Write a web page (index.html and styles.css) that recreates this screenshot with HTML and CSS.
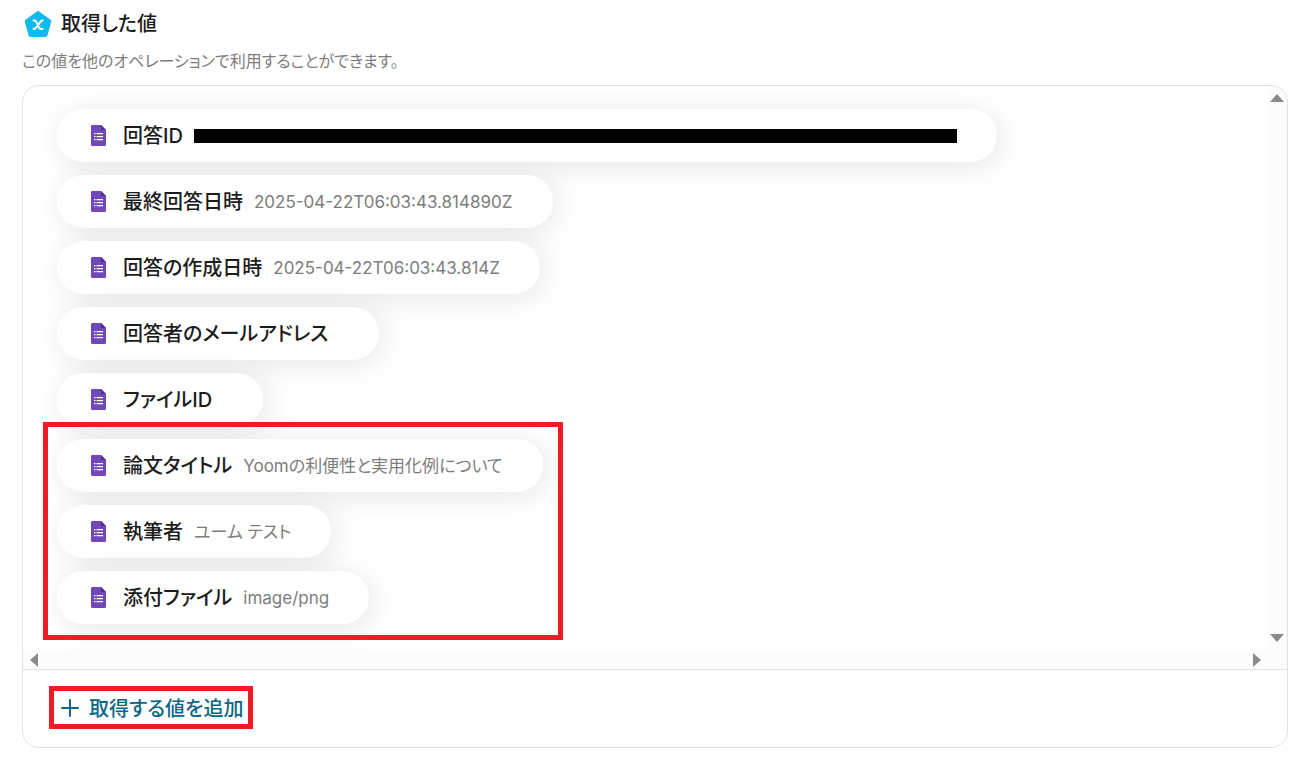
FILE: index.html
```html
<!DOCTYPE html>
<html lang="ja">
<head>
    <meta charset="UTF-8">
    <meta name="viewport" content="width=device-width, initial-scale=1.0">
    <title>取得した値</title>
    <link rel="stylesheet" href="styles.css">
</head>
<body>

<svg class="sprite" aria-hidden="true">
    <symbol id="form-icon" viewBox="0 0 15 21">
        <path fill="#7248b9" d="M1.200 0H10l5 5v14.800a1.200 1.200 0 0 1-1.200 1.200H1.200A1.200 1.200 0 0 1 0 19.800V1.200A1.200 1.200 0 0 1 1.200 0z"/>
        <path fill="#4f2f8c" d="M10 0l5 5h-5z"/>
        <path fill="#fff" d="M5.500 8h6.500v1.200H5.500zM5.500 11h6.500v1.200H5.500zM5.500 14h6.500v1.200H5.500zM3 8h1.500v1.200H3zM3 11h1.500v1.200H3zM3 14h1.500v1.200H3z"/>
    </symbol>
</svg>

<main class="container">
    <header class="heading">
        <svg class="heading-icon" viewBox="0 0 28 28" aria-hidden="true">
            <path fill="#12b9ec" stroke="#12b9ec" stroke-width="4" stroke-linejoin="round" d="M14 3L25.300 11.300L21.500 25H6.500L2.700 11.300z"/>
            <path fill="none" stroke="#fff" stroke-width="2" stroke-linecap="round" stroke-linejoin="round" d="M9.500 10.500h1q1.200 0 1.800 1.200l2.900 6q.6 1.200 1.800 1.200h1.400M18.600 10.500q-1.300 0-2.200 1.300l-4.400 5.800q-.9 1.300-2.500 1.300"/>
        </svg>
        <h1>取得した値</h1>
    </header>
    <p class="description">この値を他のオペレーションで利用することができます。</p>

    <section class="card">
        <div class="scroll-area">
            <div class="value-list">
                <div class="pill">
                    <svg class="form-icon"><use href="#form-icon"/></svg>
                    <span class="label">回答ID</span>
                    <span class="value masked"></span>
                </div>
                <div class="pill">
                    <svg class="form-icon"><use href="#form-icon"/></svg>
                    <span class="label">最終回答日時</span>
                    <span class="value">2025-04-22T06:03:43.814890Z</span>
                </div>
                <div class="pill">
                    <svg class="form-icon"><use href="#form-icon"/></svg>
                    <span class="label">回答の作成日時</span>
                    <span class="value">2025-04-22T06:03:43.814Z</span>
                </div>
                <div class="pill">
                    <svg class="form-icon"><use href="#form-icon"/></svg>
                    <span class="label">回答者のメールアドレス</span>
                    <span class="value"></span>
                </div>
                <div class="pill">
                    <svg class="form-icon"><use href="#form-icon"/></svg>
                    <span class="label">ファイルID</span>
                    <span class="value"></span>
                </div>
                <div class="highlight-group">
                    <div class="pill">
                        <svg class="form-icon"><use href="#form-icon"/></svg>
                        <span class="label">論文タイトル</span>
                        <span class="value">Yoomの利便性と実用化例について</span>
                    </div>
                    <div class="pill">
                        <svg class="form-icon"><use href="#form-icon"/></svg>
                        <span class="label">執筆者</span>
                        <span class="value">ユーム テスト</span>
                    </div>
                    <div class="pill">
                        <svg class="form-icon"><use href="#form-icon"/></svg>
                        <span class="label">添付ファイル</span>
                        <span class="value">image/png</span>
                    </div>
                </div>
            </div>
            <div class="bar bar-vertical">
                <button class="arrow" type="button" aria-label="上へ"><svg viewBox="0 0 14 8"><path d="M7 0l7 8H0z"/></svg></button>
                <button class="arrow" type="button" aria-label="下へ"><svg viewBox="0 0 14 8"><path d="M0 0h14L7 8z"/></svg></button>
            </div>
            <div class="bar bar-horizontal">
                <button class="arrow side" type="button" aria-label="左へ"><svg viewBox="0 0 8 14"><path d="M8 0v14L0 7z"/></svg></button>
                <button class="arrow side" type="button" aria-label="右へ"><svg viewBox="0 0 8 14"><path d="M0 0l8 7-8 7z"/></svg></button>
            </div>
        </div>
        <footer class="card-footer">
            <button class="add-btn" type="button">
                <svg viewBox="0 0 18 18" aria-hidden="true"><path d="M9 1v16M1 9h16"/></svg>
                取得する値を追加
            </button>
        </footer>
    </section>
</main>

</body>
</html>
```

FILE: styles.css
```css
:root {
    --text-color: #1c1c1c;
    --muted-color: #7d7d7d;
    --border-color: #e2e2e2;
    --link-color: #0b6885;
    --highlight-color: #ee1c25;
}

* {
    box-sizing: border-box;
    margin: 0;
    padding: 0;
}

body {
    font-family: Inter, "Noto Sans CJK JP", sans-serif;
    font-feature-settings: "palt";
    background-color: #fff;
    color: var(--text-color);
}

button {
    border: none;
    background: none;
    font: inherit;
    cursor: pointer;
}

.sprite {
    display: block;
    width: 0;
    height: 0;
}

.container {
    padding: 9px 13px 9px 22px;
}

.heading {
    display: flex;
    align-items: center;
    gap: 9px;
    height: 30px;
    padding-left: 2px;
}

.heading-icon {
    width: 28px;
    height: 28px;
}

h1 {
    font-size: 20px;
    font-weight: 500;
    line-height: 30px;
}

.description {
    margin: 11px 0 12px;
    font-size: 16px;
    line-height: 23px;
    color: var(--muted-color);
}

.card {
    border: 1px solid var(--border-color);
    border-radius: 17px;
    overflow: hidden;
}

.scroll-area {
    display: grid;
    grid-template-columns: 1fr 20px;
    border-bottom: 1px solid var(--border-color);
}

.value-list {
    display: flex;
    flex-direction: column;
    align-items: flex-start;
    gap: 13px;
    min-width: 0;
    padding: 23px 34px 26px;
    overflow: hidden;
}

.pill {
    display: flex;
    align-items: center;
    height: 53px;
    padding: 0 40px 0 34px;
    border-radius: 27px;
    background-color: #fff;
    box-shadow: 4px 4px 32px rgba(0, 0, 0, 0.1);
    white-space: nowrap;
}

.form-icon {
    width: 15px;
    height: 21px;
    margin-right: 17px;
}

.label {
    margin-right: 11px;
    font-size: 20px;
    font-weight: 500;
    line-height: 30px;
}

.value {
    font-size: 17px;
    line-height: 26px;
    color: var(--muted-color);
}

.masked {
    width: 763px;
    height: 14px;
    background-color: #000;
}

.highlight-group {
    position: relative;
    display: flex;
    flex-direction: column;
    align-items: flex-start;
    gap: 13px;
}

.highlight-group::after {
    content: '';
    position: absolute;
    inset: -17px -20px -16px -14px;
    border: 5px solid var(--highlight-color);
}

.bar {
    display: flex;
    justify-content: space-between;
    background-color: #fcfcfc;
}

.bar-vertical {
    flex-direction: column;
    align-items: center;
    padding: 8px 0;
}

.bar-horizontal {
    grid-column: 1 / -1;
    align-items: center;
    height: 19px;
    padding: 0 26px 0 7px;
}

.arrow {
    display: flex;
    fill: #8b8b8b;
}

.arrow svg {
    width: 14px;
    height: 8px;
}

.arrow.side svg {
    width: 8px;
    height: 14px;
}

.card-footer {
    padding: 16px 26px 18px;
}

.add-btn {
    display: flex;
    align-items: center;
    gap: 10px;
    height: 43px;
    padding: 0 5px 0 7px;
    border: 5px solid var(--highlight-color);
    color: var(--link-color);
    font-size: 20px;
    font-weight: 500;
}

.add-btn svg {
    width: 18px;
    height: 18px;
    fill: none;
    stroke: currentColor;
    stroke-width: 2;
    stroke-linecap: round;
}
```
